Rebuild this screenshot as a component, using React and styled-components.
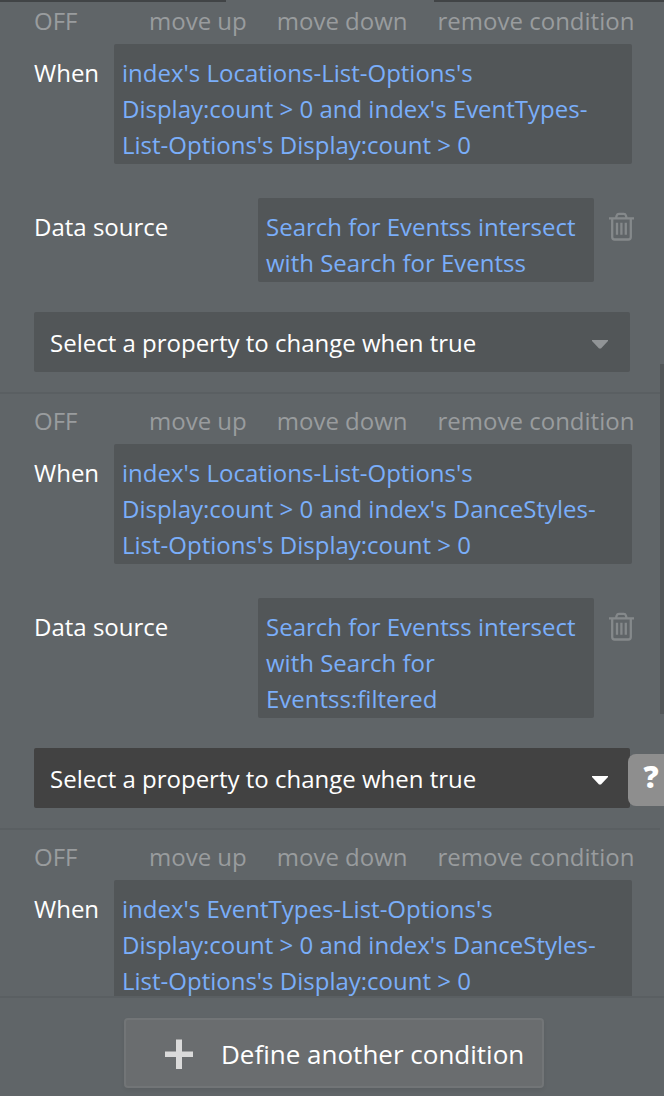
import React from 'react';
import styled, { createGlobalStyle } from 'styled-components';

const GlobalStyle = createGlobalStyle`
  * {
    box-sizing: border-box;
  }

  body {
    margin: 0;
    background: #606568;
    overflow: hidden;
  }
`;

const Panel = styled.div`
  position: relative;
  display: flex;
  flex-direction: column;
  height: 1096px;
  overflow: hidden;
  background: #606568;
  color: #fff;
  font-family: 'Open Sans', sans-serif;
  font-size: 24px;
  line-height: 36px;
`;

const TabsEdge = styled.div`
  flex: none;
  display: flex;
  justify-content: space-between;
  height: 2px;
`;

const TabEdge = styled.div`
  width: ${(props) => props.$width}px;
  background: #414446;
`;

const ConditionList = styled.div`
  flex: 1;
  min-height: 0;
  overflow: hidden;
`;

const Condition = styled.section`
  width: 660px;
  padding: 0 30px 20px 34px;
  border-bottom: 2px solid #5a5f62;

  &:first-child {
    margin-top: -8px;
  }
`;

const Actions = styled.div`
  display: flex;
  gap: 30px;
  height: 50px;
  padding-top: 9px;
  margin-right: -7px;
  color: #999c9e;
  white-space: nowrap;
`;

const Toggle = styled.span`
  flex: none;
  width: 85px;
`;

const Action = styled.span`
  flex: none;
`;

const Row = styled.div`
  display: flex;
  align-items: flex-start;
`;

const DataRow = styled(Row)`
  margin-top: 34px;
`;

const Label = styled.div`
  flex: none;
  width: ${(props) => props.$width}px;
  padding-top: 11px;
`;

const Expression = styled.div`
  flex: none;
  width: ${(props) => props.$width}px;
  height: ${(props) => props.$lines * 36 + 12}px;
  padding: 11px 8px 0;
  border-radius: 2px;
  background: #525658;
  color: #7aaefa;
  white-space: pre;
`;

const DeleteIcon = styled.svg`
  flex: none;
  margin: 14px 0 0 14px;
`;

const Select = styled.div`
  display: flex;
  align-items: center;
  justify-content: space-between;
  height: 60px;
  margin-top: 30px;
  padding: 1px 22px 0 16px;
  border-radius: 2px;
  background: ${(props) => (props.$active ? '#424242' : '#525658')};
`;

const Caret = styled.svg`
  margin-top: 4px;
  fill: ${(props) => (props.$active ? '#fff' : '#919496')};
`;

const Footer = styled.div`
  flex: none;
  display: flex;
  justify-content: center;
  height: 100px;
  padding: 20px 0 0 4px;
  border-top: 2px solid #5a5f62;
`;

const DefineButton = styled.button`
  display: flex;
  align-items: center;
  width: 420px;
  height: 70px;
  padding: 2px 0 0 38px;
  border: 2px solid #727577;
  border-radius: 4px;
  background: #6a6d6f;
  box-shadow: 0 2px 4px rgba(0, 0, 0, 0.06);
  color: #fff;
  font: inherit;
  font-size: 26px;
  white-space: nowrap;
`;

const PlusIcon = styled.svg`
  flex: none;
  margin: 0 27px 0 0;
`;

const ScrollThumb = styled.div`
  position: absolute;
  top: 364px;
  right: 0;
  width: 4px;
  height: 350px;
  background: #525658;
`;

const HelpTab = styled.div`
  position: absolute;
  top: 754px;
  left: 628px;
  width: 46px;
  height: 52px;
  padding-top: 5px;
  border-radius: 8px;
  background: #8e8e8e;
  font-size: 30px;
  font-weight: 800;
  text-align: center;
`;

const conditions = [
  {
    when: "index's Locations-List-Options's\nDisplay:count > 0 and index's EventTypes-\nList-Options's Display:count > 0",
    source: 'Search for Eventss intersect\nwith Search for Eventss',
  },
  {
    when: "index's Locations-List-Options's\nDisplay:count > 0 and index's DanceStyles-\nList-Options's Display:count > 0",
    source: 'Search for Eventss intersect\nwith Search for\nEventss:filtered',
    active: true,
  },
  {
    when: "index's EventTypes-List-Options's\nDisplay:count > 0 and index's DanceStyles-\nList-Options's Display:count > 0",
  },
];

const TrashIcon = () => (
  <DeleteIcon width="26" height="30" viewBox="0 0 26 30" fill="none" stroke="#85898b" strokeWidth="2.3">
    <path d="M1 6.3h25M8 6l.7-2.500Q9.200 1.900 11 1.900h4.800q1.600 0 2.100 1.600L18.600 6M4.200 6.300V25Q4.200 27.500 6.700 27.500h13.600q2.500 0 2.500-2.500V6.300" />
    <path d="M9 10.800v12M13.400 10.800v12M17.800 10.800v12" />
  </DeleteIcon>
);

const ConditionItem = ({ condition }) => (
  <Condition>
    <Actions>
      <Toggle>OFF</Toggle>
      <Action>move up</Action>
      <Action>move down</Action>
      <Action>remove condition</Action>
    </Actions>
    <Row>
      <Label $width={80}>When</Label>
      <Expression $width={518} $lines={3}>{condition.when}</Expression>
    </Row>
    {condition.source && (
      <>
        <DataRow>
          <Label $width={224}>Data source</Label>
          <Expression $width={336} $lines={condition.source.split('\n').length}>
            {condition.source}
          </Expression>
          <TrashIcon />
        </DataRow>
        <Select $active={condition.active}>
          Select a property to change when true
          <Caret $active={condition.active} width="16" height="9" viewBox="0 0 16 9">
            <path d="M0 0h16v1L9 8.500H7L0 1z" />
          </Caret>
        </Select>
      </>
    )}
  </Condition>
);

const App = () => {
  return (
    <>
      <GlobalStyle />
      <Panel>
        <TabsEdge>
          <TabEdge $width={226} />
          <TabEdge $width={230} />
        </TabsEdge>
        <ConditionList>
          {conditions.map((condition, index) => (
            <ConditionItem key={index} condition={condition} />
          ))}
        </ConditionList>
        <Footer>
          <DefineButton>
            <PlusIcon width="30" height="30" viewBox="0 0 30 30">
              <path d="M12 .500h6v12h11v5.500H18v12h-6V18H1v-5.500h11z" fill="#dadada" />
            </PlusIcon>
            Define another condition
          </DefineButton>
        </Footer>
        <ScrollThumb />
        <HelpTab>?</HelpTab>
      </Panel>
    </>
  );
};

export default App;
